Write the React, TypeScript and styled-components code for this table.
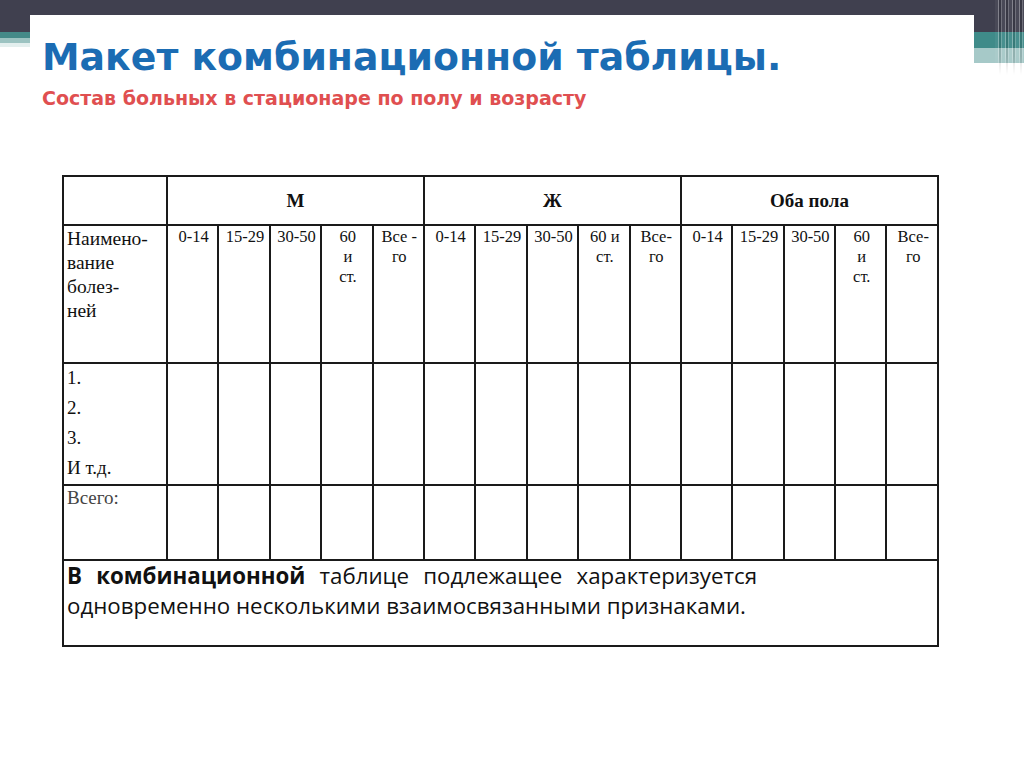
import React from "react";
import styled, { createGlobalStyle } from "styled-components";

const Global = createGlobalStyle`
  html, body { margin: 0; padding: 0; background: #ffffff; }
  body { width: 1024px; height: 767px; overflow: hidden; }
`;

const Page = styled.div`
  width: 1024px;
  height: 767px;
  display: flex;
  flex-direction: column;
  background: #ffffff;
`;

const TopBand = styled.div`
  height: 15px;
  flex: none;
  background: #40404f;
`;

const Body = styled.div`
  flex: 1;
  display: flex;
`;

const LeftDeco = styled.div`
  width: 30px;
  flex: none;
  background: linear-gradient(
    to bottom,
    #40404f 0px,
    #40404f 17px,
    #448a88 17px,
    #448a88 23px,
    #9cc3c1 23px,
    #9cc3c1 28px,
    #e3efee 28px,
    #e3efee 32px,
    #ffffff 32px
  );
`;

const RightDeco = styled.div`
  width: 50px;
  flex: none;
  position: relative;
  background: linear-gradient(
    to bottom,
    #40404f 0px,
    #40404f 17px,
    #3f8b89 17px,
    #3f8b89 33px,
    #a6c9c8 33px,
    #a6c9c8 48px,
    #ffffff 48px
  );
`;

const Stripes = styled.div`
  position: absolute;
  left: 21px;
  top: -15px;
  width: 29px;
  height: 75px;
  background: repeating-linear-gradient(
    to right,
    rgba(255, 255, 255, 0.05) 0px,
    rgba(255, 255, 255, 0.05) 3px,
    rgba(255, 255, 255, 0.35) 3px,
    rgba(255, 255, 255, 0.35) 4px,
    rgba(0, 0, 0, 0.12) 4px,
    rgba(0, 0, 0, 0.12) 6px,
    rgba(255, 255, 255, 0.25) 6px,
    rgba(255, 255, 255, 0.25) 7px
  );
  -webkit-mask-image: linear-gradient(to bottom, #000 0, #000 75%, transparent 100%);
  mask-image: linear-gradient(to bottom, #000 0, #000 75%, transparent 100%);
`;

const Card = styled.div`
  flex: 1;
  background: #ffffff;
  padding: 19px 0 0 12px;
  display: flex;
  flex-direction: column;
`;

const Title = styled.h1`
  margin: 0;
  font-family: "DejaVu Sans", "Open Sans", sans-serif;
  font-weight: 700;
  font-size: 37.8px;
  line-height: 46px;
  color: #1b6cb3;
  white-space: nowrap;
`;

const Subtitle = styled.h2`
  margin: 6px 0 0 0;
  font-family: "DejaVu Sans", "Open Sans", sans-serif;
  font-weight: 700;
  font-size: 19px;
  line-height: 24px;
  color: #e04f50;
  white-space: nowrap;
`;

const TableWrap = styled.div`
  margin: 65px 0 0 20px;
`;

const Grid = styled.table`
  border-collapse: collapse;
  table-layout: fixed;
  width: 877px;
  font-family: "Liberation Serif", "Times New Roman", serif;
  color: #111;
`;

const Cell = styled.td<{ $h?: number; $align?: string; $bold?: boolean }>`
  border: 2px solid #1a1a1a;
  padding: 1px 1px 0 3px;
  vertical-align: top;
  text-align: ${(p) => p.$align || "center"};
  font-weight: ${(p) => (p.$bold ? 700 : 400)};
  height: ${(p) => (p.$h ? `${p.$h}px` : "auto")};
  font-size: 16.5px;
  line-height: 20px;
  box-sizing: border-box;
`;

const GroupCell = styled(Cell)`
  vertical-align: middle;
  font-size: 19px;
  padding: 0;
`;

const NameText = styled.div`
  font-size: 19.5px;
  line-height: 24px;
`;

const ItemsText = styled.div`
  font-size: 19px;
  line-height: 30px;
  margin-top: -2px;
`;

const TotalText = styled.div`
  font-size: 19px;
  line-height: 22px;
  color: #444;
`;

const NoteCell = styled.td`
  border: 2px solid #1a1a1a;
  height: 86px;
  vertical-align: top;
  padding: 0 0 0 3px;
  box-sizing: border-box;
  box-shadow: 1px 1px 0 #555;
`;

const NoteLine = styled.div<{ $justify?: boolean }>`
  width: 690px;
  white-space: nowrap;
  text-align: ${(p) => (p.$justify ? "justify" : "left")};
  text-align-last: ${(p) => (p.$justify ? "justify" : "left")};
  font-family: "Open Sans", "Noto Sans", sans-serif;
  font-size: 22.3px;
  line-height: 30px;
  color: #111;
`;

const ages = ["0-14", "15-29", "30-50"];

type Group = { name: string; sixty: React.ReactNode; total: React.ReactNode };

const groups: Group[] = [
  {
    name: "М",
    sixty: (
      <>
        60
        <br />и<br />
        ст.
      </>
    ),
    total: (
      <>
        Все -<br />
        го
      </>
    ),
  },
  {
    name: "Ж",
    sixty: (
      <>
        60 и<br />
        ст.
      </>
    ),
    total: (
      <>
        Все-
        <br />
        го
      </>
    ),
  },
  {
    name: "Оба пола",
    sixty: (
      <>
        60
        <br />и<br />
        ст.
      </>
    ),
    total: (
      <>
        Все-
        <br />
        го
      </>
    ),
  },
];

const emptyCols = Array.from({ length: 15 }, (_, i) => i);

export default function App() {
  return (
    <Page>
      <Global />
      <TopBand />
      <Body>
        <LeftDeco />
        <Card>
          <Title>Макет комбинационной таблицы.</Title>
          <Subtitle>Состав больных в стационаре по полу и возрасту</Subtitle>
          <TableWrap>
            <Grid>
              <colgroup>
                <col style={{ width: 104 }} />
                {emptyCols.map((i) => (
                  <col key={i} />
                ))}
              </colgroup>
              <tbody>
                <tr>
                  <Cell $h={49} />
                  {groups.map((g) => (
                    <GroupCell key={g.name} colSpan={5} $bold>
                      {g.name}
                    </GroupCell>
                  ))}
                </tr>
                <tr>
                  <Cell $h={138} $align="left">
                    <NameText>
                      Наимено-
                      <br />
                      вание
                      <br />
                      болез-
                      <br />
                      ней
                    </NameText>
                  </Cell>
                  {groups.map((g) => (
                    <React.Fragment key={g.name}>
                      {ages.map((a) => (
                        <Cell key={a}>{a}</Cell>
                      ))}
                      <Cell>{g.sixty}</Cell>
                      <Cell>{g.total}</Cell>
                    </React.Fragment>
                  ))}
                </tr>
                <tr>
                  <Cell $h={122} $align="left">
                    <ItemsText>
                      1.
                      <br />
                      2.
                      <br />
                      3.
                      <br />И т.д.
                    </ItemsText>
                  </Cell>
                  {emptyCols.map((i) => (
                    <Cell key={i} />
                  ))}
                </tr>
                <tr>
                  <Cell $h={75} $align="left">
                    <TotalText>Всего:</TotalText>
                  </Cell>
                  {emptyCols.map((i) => (
                    <Cell key={i} />
                  ))}
                </tr>
                <tr>
                  <NoteCell colSpan={16}>
                    <NoteLine $justify>
                      <b>В комбинационной</b> таблице подлежащее характеризуется
                    </NoteLine>
                    <NoteLine>одновременно несколькими взаимосвязанными признаками.</NoteLine>
                  </NoteCell>
                </tr>
              </tbody>
            </Grid>
          </TableWrap>
        </Card>
        <RightDeco>
          <Stripes />
        </RightDeco>
      </Body>
    </Page>
  );
}
